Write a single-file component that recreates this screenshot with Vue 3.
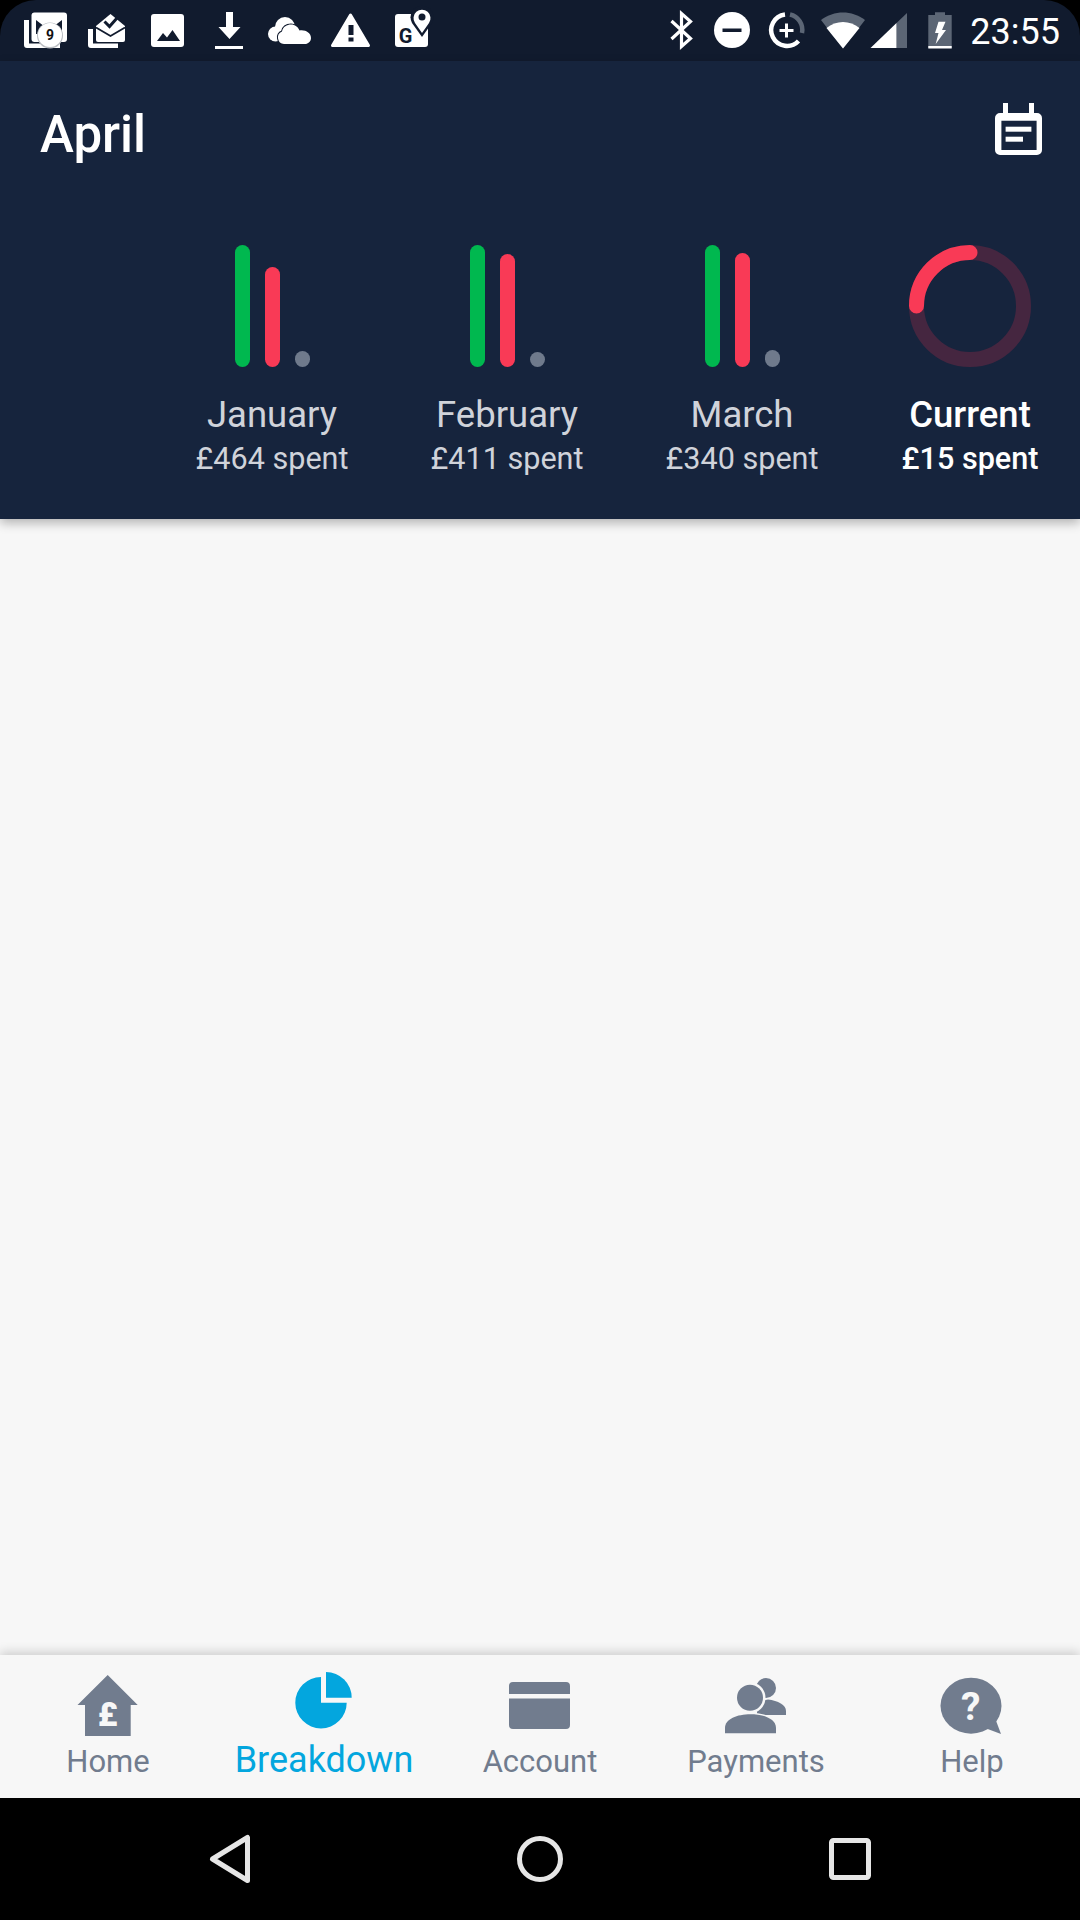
<template>
  <div class="phone">
    <div class="status">
      <!-- notification icons -->
      <svg class="status-left" width="440" height="61" viewBox="0 0 440 61">
        <path d="M24 20h5v23.500h31V48H27a3 3 0 0 1-3-3z" fill="#fff" />
        <rect x="31.500" y="12.500" width="35.500" height="29.500" rx="3" fill="#fff" />
        <path d="M36 17l13 10 13-10v17H36z" fill="#111b2e" />
        <path d="M36 17h3l10 8 10-8h3v3L49 30 36 20z" fill="#fff" />
        <circle cx="50" cy="35.500" r="13" fill="#b9bcc1" />
        <circle cx="50" cy="35" r="12" fill="#fff" />
        <text x="50" y="40" text-anchor="middle" class="badge-num">9</text>

        <path d="M88 29h5v14.500h25V48H91a3 3 0 0 1-3-3z" fill="#fff" />
        <path d="M96 26l14.500-12L125 26v14a2 2 0 0 1-2 2H98a2 2 0 0 1-2-2z" fill="#fff" />
        <path d="M96 27.500l14.500 8.500L125 27.500" fill="none" stroke="#111b2e" stroke-width="1.800" />
        <path d="M104.500 21.500l5 5 8-9" fill="none" stroke="#111b2e" stroke-width="3" />

        <rect x="151" y="14" width="33" height="33" rx="3" fill="#fff" />
        <path d="M157 41l6-8 4 4.500 5.500-7.500 7.500 11z" fill="#111b2e" />

        <path d="M226 12h7v15h7.500l-11 12-11-12H226z" fill="#fff" />
        <rect x="215" y="46" width="28" height="3" fill="#fff" />

        <circle cx="285" cy="27" r="10" fill="#fff" />
        <circle cx="275.500" cy="34" r="7.500" fill="#fff" />
        <rect x="275" y="28" width="20" height="13" fill="#fff" />
        <path d="M284 44a6.500 6.500 0 0 1-2-12.500c1-5 5-7 9-7 4 0 7 2.500 8.500 6 6-1 11.500 2.500 11.500 7.500 0 3.500-3 6-6 6z" fill="#fff" stroke="#111b2e" stroke-width="2" paint-order="stroke" />

        <path d="M350.500 15L368.500 45.500H332.500z" fill="#fff" stroke="#fff" stroke-width="3" stroke-linejoin="round" />
        <rect x="348.500" y="25" width="5" height="10" fill="#111b2e" />
        <rect x="348.500" y="37.500" width="5" height="4" fill="#111b2e" />

        <rect x="395" y="14" width="33" height="33" rx="3" fill="#fff" />
        <text x="405.500" y="43" text-anchor="middle" class="maps-g">G</text>
        <path d="M422 37l-10-14a11.500 11.500 0 1 1 20 0z" fill="#111b2e" />
        <path d="M422 33l-7-10a8.500 8.500 0 1 1 14 0z" fill="#fff" />
        <circle cx="422" cy="17" r="3.500" fill="#111b2e" />
      </svg>

      <div class="status-right">
        <svg width="300" height="61" viewBox="660 0 300 61">
          <path d="M671.500 39l19-17.500L681.500 13.500v33l9-8L671.500 21" fill="none" stroke="#fff" stroke-width="3.200" />

          <circle cx="732" cy="30" r="18" fill="#fff" />
          <rect x="722.500" y="28.500" width="19" height="3.500" fill="#111b2e" />

          <path d="M798.500 41A15.800 15.800 0 1 1 785 14.500" fill="none" stroke="#fff" stroke-width="4.500" />
          <path d="M790 14.500A15.800 15.800 0 0 1 802 33" fill="none" stroke="#5c6675" stroke-width="4.500" />
          <path d="M786.500 23.500v14M779.500 30.500h14" fill="none" stroke="#fff" stroke-width="3" />

          <path d="M821 20C834 10 852 10 865 20L843 48.500z" fill="#5c6675" />
          <path d="M826.500 28C836 20 850 20 859.500 28L843 48.500z" fill="#fff" />

          <path d="M896.500 23L907 13v35h-10.500z" fill="#5c6675" />
          <path d="M870.500 48L896.500 23v25z" fill="#fff" />

          <path d="M935 15v-2.700h10V15h6.700v33h-23.400V15z" fill="#5c6675" />
          <rect x="928.300" y="46" width="23.400" height="2.500" fill="#fff" />
          <path d="M938.500 21.700h7L942 30h4L935.700 44l2.800-11H935z" fill="#fff" />
        </svg>
        <span class="time">23:55</span>
      </div>
    </div>

    <header class="header">
      <div class="title-row">
        <h1>April</h1>
        <svg width="47" height="52" viewBox="0 0 47 52">
          <path d="M8 0h5v10h21V0h5v10h3a5 5 0 0 1 5 5v32a5 5 0 0 1-5 5H5a5 5 0 0 1-5-5V15a5 5 0 0 1 5-5h3zM6.400 17.700V47h35.200V17.700z" fill="#fff" fill-rule="evenodd" />
          <rect x="10.600" y="23.700" width="25.800" height="5" fill="#fff" />
          <rect x="10.600" y="33.700" width="17.400" height="5" fill="#fff" />
        </svg>
      </div>

      <div class="months">
        <div v-for="m in months" :key="m.name" class="month">
          <div class="bars">
            <span class="bar green" :style="{ height: m.income + 'px' }"></span>
            <span class="bar red" :style="{ height: m.spend + 'px' }"></span>
            <span class="bar grey" :style="{ height: m.rest + 'px' }"></span>
          </div>
          <div class="name">{{ m.name }}</div>
          <div class="spent">{{ m.spent }} spent</div>
        </div>
        <div class="month current">
          <svg class="ring" width="122" height="122" viewBox="0 0 122 122">
            <circle cx="61" cy="61" r="53.500" fill="none" stroke="#452640" stroke-width="15" />
            <path d="M7.500 61A53.500 53.500 0 0 1 61 7.500" fill="none" stroke="#f93a56" stroke-width="15" stroke-linecap="round" />
          </svg>
          <div class="name">Current</div>
          <div class="spent">£15 spent</div>
        </div>
      </div>
    </header>

    <main class="content"></main>

    <nav class="tabs">
      <div class="tab">
        <svg width="70" height="64" viewBox="0 0 70 64">
          <path d="M34.700 3L64.700 33H57.700V64H12V33H4.500z" fill="#717c8e" />
          <text x="34.700" y="54" text-anchor="middle" class="home-pound">£</text>
        </svg>
        <span>Home</span>
      </div>
      <div class="tab active">
        <svg width="70" height="64" viewBox="0 0 70 64">
          <path d="M32 5A25.700 25.700 0 1 0 57.700 30.700H32z" fill="#03a6de" />
          <path d="M37 0A25.700 25.700 0 0 1 62.700 25.700H37z" fill="#03a6de" />
        </svg>
        <span>Breakdown</span>
      </div>
      <div class="tab">
        <svg width="70" height="64" viewBox="0 0 70 64">
          <path d="M8 10h53a4 4 0 0 1 4 4v8H4v-8a4 4 0 0 1 4-4zM4 26.500h61V53a4 4 0 0 1-4 4H8a4 4 0 0 1-4-4z" fill="#717c8e" />
        </svg>
        <span>Account</span>
      </div>
      <div class="tab">
        <svg width="70" height="64" viewBox="0 0 70 64">
          <circle cx="45" cy="16" r="10" fill="#717c8e" />
          <path d="M36 43H65V39C65 33 57 28.500 47 27.500L36 30z" fill="#717c8e" />
          <circle cx="29" cy="25.700" r="15.500" fill="#f7f7f7" />
          <circle cx="29" cy="25.700" r="13" fill="#717c8e" />
          <path d="M4 61.300V56C4 47 16 42.300 29.500 42.300S55 47 55 56v5.300z" fill="#717c8e" stroke="#f7f7f7" stroke-width="3" paint-order="stroke" />
        </svg>
        <span>Payments</span>
      </div>
      <div class="tab">
        <svg width="70" height="64" viewBox="0 0 70 64">
          <ellipse cx="34" cy="33.700" rx="30.500" ry="28" fill="#717c8e" />
          <path d="M58 46L64 62 48 56z" fill="#717c8e" />
          <text x="33.700" y="48" text-anchor="middle" class="help-mark">?</text>
        </svg>
        <span>Help</span>
      </div>
    </nav>

    <div class="softkeys">
      <div class="key">
        <svg width="52" height="52" viewBox="0 0 52 52">
          <path d="M8.500 26L43.500 4.500V47.500z" fill="none" stroke="#e6e6e6" stroke-width="5" stroke-linejoin="round" />
        </svg>
      </div>
      <div class="key">
        <svg width="52" height="52" viewBox="0 0 52 52">
          <circle cx="26" cy="26" r="20.500" fill="none" stroke="#e6e6e6" stroke-width="5" />
        </svg>
      </div>
      <div class="key">
        <svg width="52" height="52" viewBox="0 0 52 52">
          <rect x="7.500" y="7.500" width="37" height="37" rx="2" fill="none" stroke="#e6e6e6" stroke-width="5" />
        </svg>
      </div>
    </div>
  </div>
</template>

<script setup>
const months = [
  { name: 'January', spent: '£464', income: 122, spend: 100, rest: 16 },
  { name: 'February', spent: '£411', income: 122, spend: 113, rest: 15 },
  { name: 'March', spent: '£340', income: 122, spend: 114, rest: 17 }
]
</script>

<style>
html,
body {
  margin: 0;
  background: #000;
}
</style>

<style scoped>
.phone {
  display: flex;
  flex-direction: column;
  width: 1080px;
  height: 1920px;
  overflow: hidden;
  background: #000;
  font-family: Roboto, "Liberation Sans", sans-serif;
}
.status {
  display: flex;
  justify-content: space-between;
  flex: none;
  height: 61px;
  background: #111b2e;
  border-radius: 36px 36px 0 0;
}
.status-right {
  display: flex;
  align-items: flex-start;
  padding-right: 20px;
}
.time {
  margin-left: 10px;
  padding-top: 4px;
  color: #fff;
  font-size: 36px;
  line-height: 56px;
}
.badge-num {
  fill: #111;
  font-size: 14px;
  font-weight: 700;
}
.maps-g {
  fill: #111b2e;
  font-size: 20px;
  font-weight: 700;
}
.header {
  position: relative;
  z-index: 1;
  flex: none;
  height: 458px;
  background: #16243d;
  box-shadow: 0 4px 10px rgba(0, 0, 0, 0.28);
}
.title-row {
  display: flex;
  justify-content: space-between;
  align-items: flex-start;
  height: 142px;
  padding: 42px 38px 0 40px;
}
.title-row h1 {
  margin: 4px 0 0;
  color: #fff;
  font-size: 51px;
  font-weight: 500;
  line-height: 56px;
}
.months {
  display: flex;
  padding-left: 154.500px;
}
.month {
  flex: none;
  display: flex;
  flex-direction: column;
  align-items: center;
  width: 235px;
  color: #d0d3da;
}
.month.current {
  width: 221px;
  color: #fff;
  font-weight: 500;
}
.bars {
  display: flex;
  align-items: flex-end;
  gap: 15px;
  height: 122px;
}
.bar {
  width: 15px;
  border-radius: 8px;
}
.green {
  background: #00b84f;
}
.red {
  background: #f93a56;
}
.grey {
  background: #6f7a8c;
}
.ring {
  display: block;
}
.name {
  margin-top: 27.500px;
  font-size: 36.500px;
  line-height: 40px;
}
.spent {
  margin-top: 6px;
  font-size: 30.600px;
  line-height: 36px;
}
.content {
  flex: 1;
  background: #f7f7f7;
}
.tabs {
  position: relative;
  z-index: 1;
  display: flex;
  flex: none;
  height: 143px;
  box-sizing: border-box;
  padding-top: 17px;
  background: #f7f7f7;
  box-shadow: 0 -3px 10px rgba(0, 0, 0, 0.17);
}
.tab {
  display: flex;
  flex-direction: column;
  align-items: center;
  width: 216px;
  color: #717c8e;
  font-size: 31px;
}
.tab svg {
  display: block;
  flex: none;
}
.tab span {
  line-height: 40px;
  height: 40px;
  margin-top: 6px;
}
.tab.active {
  color: #03a6de;
  font-size: 36px;
}
.tab.active span {
  margin-top: 4px;
}
.home-pound {
  fill: #f7f7f7;
  font-size: 33px;
  font-weight: 900;
}
.help-mark {
  fill: #f7f7f7;
  font-size: 39px;
  font-weight: 700;
}
.softkeys {
  display: flex;
  flex: none;
  align-items: center;
  height: 122px;
  padding: 0 75px;
  background: #000;
}
.key {
  display: flex;
  justify-content: center;
  width: 310px;
}
.key svg {
  display: block;
}
</style>
